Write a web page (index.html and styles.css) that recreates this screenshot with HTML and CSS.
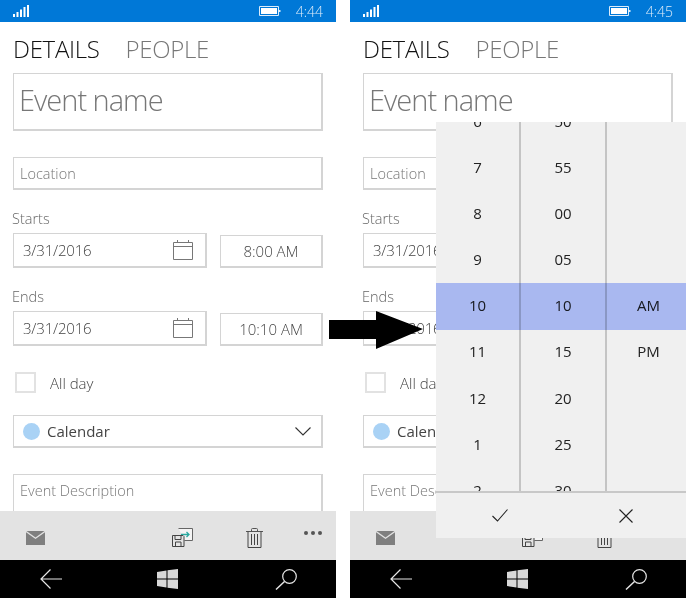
FILE: index.html
```html
<!DOCTYPE html>
<html lang="en">
<head>
    <meta charset="UTF-8">
    <meta name="viewport" content="width=device-width, initial-scale=1.0">
    <title>New event time picker</title>
    <link rel="stylesheet" href="styles.css">
</head>
<body>
    <svg class="defs" width="0" height="0">
        <symbol id="signal" viewBox="0 0 16 12"><path d="M0 9h2v3H0zM3.500 7h2v5h-2zM7 4.500h2V12H7zM10.500 2h2v10h-2zM14 0h2v12h-2z" fill="#fff"/></symbol>
        <symbol id="battery" viewBox="0 0 22 10"><path d="M.5.500h19v9H.5z" fill="none" stroke="#dcecfa"/><path d="M2 2h16v6H2z" fill="#fff"/><path d="M20 4h1.500v2H20z" fill="#dcecfa"/></symbol>
        <symbol id="calendar" viewBox="0 0 20 20"><path d="M.5 2.500h19v17H.5zM.5 6.500h19M4.500 0v3M15.500 0v3" fill="none" stroke="#777"/></symbol>
        <symbol id="chevron" viewBox="0 0 16 9"><path d="M.5.500 8 8 15.500.500" fill="none" stroke="#333" stroke-width="1.100"/></symbol>
        <symbol id="mail" viewBox="0 0 19 14"><path d="M0 1.200 9.500 8 19 1.200V14H0z" fill="#7f7f7f"/><path d="M.5 0h18L9.500 6.500z" fill="#7f7f7f"/></symbol>
        <symbol id="save" viewBox="0 0 21 19"><path d="M6.500.500h14v12h-8" fill="#f4f4f4" stroke="#666"/><path d="M9 6.500h8M14.500 4l2.500 2.500L14.500 9" fill="none" stroke="#2aa9a0" stroke-width="1.300"/><path d="M.500 7.500h10.500l1 1v10h-11.500z" fill="#e4e4e4" stroke="#444"/><path d="M3 7.500v4h6v-4M3.500 18.500v-4.500h5.500v4.500" fill="none" stroke="#444"/></symbol>
        <symbol id="trash" viewBox="0 0 17 20"><path d="M0 3.500h17M5.500 3.500V1.500q0-1 1-1h4q1 0 1 1v2" fill="none" stroke="#555"/><path d="M2 3.500v16h13v-16M5.500 6v11M8.500 6v11M11.500 6v11" fill="none" stroke="#444"/></symbol>
        <symbol id="back" viewBox="0 0 22 20"><path d="M22 10H1M10.500.500 1 10l9.500 9.500" fill="none" stroke="#e6e6e6" stroke-width="1.200"/></symbol>
        <symbol id="windows" viewBox="0 0 21 20"><path d="M0 3 9.500 1.500v8H0zM10.500 1.300 21 0v9.500H10.500zM0 10.500h9.500v8L0 17zM10.500 10.500H21V20l-10.500-1.300z" fill="#d8d8d8"/></symbol>
        <symbol id="search" viewBox="0 0 22 21"><circle cx="14.500" cy="7.500" r="6.800" fill="none" stroke="#e6e6e6" stroke-width="1.200"/><path d="M9.500 12.500 1 20.500" fill="none" stroke="#e6e6e6" stroke-width="1.400"/></symbol>
        <symbol id="check" viewBox="0 0 16 13"><path d="M.5 7 5.500 12 15.500.5" fill="none" stroke="#222" stroke-width="1.100"/></symbol>
        <symbol id="close" viewBox="0 0 14 14"><path d="M.5.500l13 13M13.500.500l-13 13" fill="none" stroke="#222" stroke-width="1.100"/></symbol>
    </svg>

    <div class="screens">
        <section class="phone">
            <header class="status-bar">
                <svg class="icon-signal"><use href="#signal"/></svg>
                <svg class="icon-battery"><use href="#battery"/></svg>
                <span class="clock">4:44</span>
            </header>
            <main class="content">
                <nav class="tabs"><span class="tab active">DETAILS</span><span class="tab">PEOPLE</span></nav>
                <div class="field field-name">Event name</div>
                <div class="field field-location">Location</div>
                <label class="caption">Starts</label>
                <div class="when">
                    <div class="field field-date">3/31/2016 <svg class="icon-calendar"><use href="#calendar"/></svg></div>
                    <div class="field field-time">8:00 AM</div>
                </div>
                <label class="caption caption-ends">Ends</label>
                <div class="when">
                    <div class="field field-date">3/31/2016 <svg class="icon-calendar"><use href="#calendar"/></svg></div>
                    <div class="field field-time">10:10 AM</div>
                </div>
                <div class="all-day"><span class="checkbox"></span>All day</div>
                <div class="field field-select"><span class="dot"></span>Calendar<svg class="icon-chevron"><use href="#chevron"/></svg></div>
                <div class="field field-description">Event Description</div>
            </main>
            <div class="app-bar">
                <svg class="icon-mail"><use href="#mail"/></svg>
                <svg class="icon-save"><use href="#save"/></svg>
                <svg class="icon-trash"><use href="#trash"/></svg>
                <span class="more"><i></i><i></i><i></i></span>
            </div>
            <footer class="nav-bar">
                <svg class="icon-back"><use href="#back"/></svg>
                <svg class="icon-windows"><use href="#windows"/></svg>
                <svg class="icon-search"><use href="#search"/></svg>
            </footer>
        </section>

        <section class="phone">
            <header class="status-bar">
                <svg class="icon-signal"><use href="#signal"/></svg>
                <svg class="icon-battery"><use href="#battery"/></svg>
                <span class="clock">4:45</span>
            </header>
            <main class="content">
                <nav class="tabs"><span class="tab active">DETAILS</span><span class="tab">PEOPLE</span></nav>
                <div class="field field-name">Event name</div>
                <div class="field field-location">Location</div>
                <label class="caption">Starts</label>
                <div class="when">
                    <div class="field field-date">3/31/2016 <svg class="icon-calendar"><use href="#calendar"/></svg></div>
                    <div class="field field-time">8:00 AM</div>
                </div>
                <label class="caption caption-ends">Ends</label>
                <div class="when">
                    <div class="field field-date">3/31/2016 <svg class="icon-calendar"><use href="#calendar"/></svg></div>
                    <div class="field field-time">10:10 AM</div>
                </div>
                <div class="all-day"><span class="checkbox"></span>All day</div>
                <div class="field field-select"><span class="dot"></span>Calendar<svg class="icon-chevron"><use href="#chevron"/></svg></div>
                <div class="field field-description">Event Description</div>
            </main>
            <div class="app-bar">
                <svg class="icon-mail"><use href="#mail"/></svg>
                <svg class="icon-save"><use href="#save"/></svg>
                <svg class="icon-trash"><use href="#trash"/></svg>
                <span class="more"><i></i><i></i><i></i></span>
            </div>
            <footer class="nav-bar">
                <svg class="icon-back"><use href="#back"/></svg>
                <svg class="icon-windows"><use href="#windows"/></svg>
                <svg class="icon-search"><use href="#search"/></svg>
            </footer>

            <div class="picker">
                <div class="wheels">
                    <ul class="wheel">
                        <li>6</li><li>7</li><li>8</li><li>9</li><li>10</li><li>11</li><li>12</li><li>1</li><li>2</li>
                    </ul>
                    <ul class="wheel wheel-minutes">
                        <li>50</li><li>55</li><li>00</li><li>05</li><li>10</li><li>15</li><li>20</li><li>25</li><li>30</li>
                    </ul>
                    <ul class="wheel wheel-period">
                        <li></li><li></li><li></li><li></li><li>AM</li><li>PM</li>
                    </ul>
                </div>
                <div class="band"></div>
                <div class="picker-actions">
                    <svg class="icon-check"><use href="#check"/></svg>
                    <svg class="icon-close"><use href="#close"/></svg>
                </div>
            </div>
        </section>
    </div>

    <div class="arrow"></div>
</body>
</html>
```

FILE: styles.css
```css
* {
    box-sizing: border-box;
}

body {
    margin: 0;
    background-color: #fff;
    font-family: "Open Sans", "Noto Sans", sans-serif;
    color: #444;
}

.defs {
    position: absolute;
}

.screens {
    display: flex;
    justify-content: space-between;
    width: 686px;
    height: 598px;
}

.phone {
    position: relative;
    display: flex;
    flex-direction: column;
    width: 336px;
    height: 598px;
    overflow: hidden;
}

/* status bar */
.status-bar {
    display: flex;
    align-items: center;
    height: 22px;
    padding: 0 13px;
    background-color: #0078d7;
    color: #dcecfa;
}

.icon-signal {
    width: 16px;
    height: 12px;
    margin-bottom: 1px;
}

.icon-battery {
    width: 22px;
    height: 10px;
    margin-left: auto;
}

.clock {
    margin-left: 15px;
    font-size: 14px;
    font-weight: 300;
}

/* form */
.content {
    flex: 1;
    min-height: 0;
    overflow: hidden;
    padding: 0 13px;
}

.tabs {
    display: flex;
    gap: 26px;
    height: 51px;
    padding-top: 10px;
    font-size: 24px;
    line-height: 34px;
    font-weight: 300;
    letter-spacing: -.3px;
}

.tab {
    color: #777;
}

.tab.active {
    color: #111;
}

.field {
    display: flex;
    align-items: center;
    border: 2px solid #d4d4d4;
    border-width: 1px 2px 2px 1px;
    background-color: #fff;
    color: #777;
    padding-left: 6px;
    font-size: 14.500px;
    font-weight: 300;
}

.field-name {
    width: 310px;
    height: 58px;
    font-size: 29px;
    letter-spacing: -1px;
    padding-left: 5px;
    padding-bottom: 5px;
}

.field-location {
    width: 310px;
    height: 33px;
    margin-top: 26px;
}

.caption {
    display: block;
    height: 43px;
    padding-top: 19px;
    margin-left: -1px;
    font-size: 14.500px;
    font-weight: 300;
    line-height: 19px;
    color: #666;
}

.caption-ends {
    height: 43px;
    padding-top: 19px;
}

.when {
    display: flex;
    align-items: flex-end;
    justify-content: space-between;
    width: 310px;
}

.field-date {
    justify-content: space-between;
    width: 194px;
    height: 35px;
    padding: 0 12px 0 9px;
    font-size: 15px;
    letter-spacing: -.2px;
    color: #444;
}

.icon-calendar {
    width: 20px;
    height: 20px;
}

.field-time {
    justify-content: center;
    width: 103px;
    height: 33px;
    padding: 0;
    font-size: 15px;
    color: #444;
}

.all-day {
    display: flex;
    align-items: center;
    height: 21px;
    margin: 26px 0 0 2px;
    font-size: 15px;
    font-weight: 300;
    color: #444;
}

.checkbox {
    width: 21px;
    height: 21px;
    margin-right: 14px;
    border: 2px solid #e2e2e2;
}

.field-select {
    width: 310px;
    height: 33px;
    margin-top: 22px;
    padding: 0 10px 0 9px;
    font-size: 15px;
    font-weight: 400;
    color: #444;
}

.dot {
    width: 17px;
    height: 17px;
    margin-right: 7px;
    border-radius: 50%;
    background-color: #a9d2f5;
}

.icon-chevron {
    width: 16px;
    height: 9px;
    margin-left: auto;
}

.field-description {
    width: 310px;
    height: 50px;
    margin-top: 26px;
    align-items: flex-start;
    padding-top: 6px;
}

/* bars at the bottom */
.app-bar {
    position: relative;
    display: flex;
    align-items: center;
    height: 49px;
    padding: 4px 14px 0 26px;
    background-color: #e3e3e3;
}

.icon-mail {
    width: 19px;
    height: 14px;
}

.icon-save {
    width: 21px;
    height: 19px;
    margin-left: 127px;
}

.icon-trash {
    width: 17px;
    height: 20px;
    margin-left: 53px;
}

.more {
    display: flex;
    gap: 3px;
    margin: -9px 0 0 auto;
}

.more i {
    width: 4px;
    height: 4px;
    border-radius: 50%;
    background-color: #555;
}

.nav-bar {
    display: flex;
    align-items: center;
    height: 38px;
    padding: 0 39px 0 40px;
    background-color: #000;
}

.icon-back {
    width: 22px;
    height: 20px;
}

.icon-windows {
    width: 21px;
    height: 20px;
    margin-left: 95px;
}

.icon-search {
    width: 22px;
    height: 21px;
    margin-left: auto;
}

/* time picker */
.picker {
    position: absolute;
    left: 86px;
    top: 122px;
    width: 250px;
    height: 416px;
    display: flex;
    flex-direction: column;
    background-color: #f0f0f0;
    color: #222;
}

.wheels {
    display: flex;
    height: 371px;
    overflow: hidden;
    border-bottom: 2px solid #c8c8c8;
}

.wheel {
    list-style: none;
    margin: -23px 0 0;
    padding: 0;
    width: 85px;
    border-right: 2px solid #c4c4c4;
    font-size: 15px;
    text-align: center;
}

.wheel li {
    height: 46.100px;
    line-height: 45px;
}

.wheel-minutes {
    width: 86px;
}

.wheel-period {
    flex: 1;
    border-right: 0;
    padding-left: 4px;
}

.band {
    position: absolute;
    left: 0;
    right: 0;
    top: 161px;
    height: 47px;
    background-color: #b4c4ff;
    mix-blend-mode: multiply;
}

.picker-actions {
    position: relative;
    flex: 1;
    display: flex;
    align-items: center;
    padding: 0 53px 0 56px;
}

.icon-check {
    width: 16px;
    height: 13px;
}

.icon-close {
    width: 14px;
    height: 14px;
    margin-left: auto;
}

.arrow {
    position: absolute;
    left: 329px;
    top: 311px;
    width: 94px;
    height: 38px;
    background-color: #000;
    clip-path: polygon(0 9px, 47px 9px, 47px 0, 94px 18px, 47px 38px, 47px 28px, 0 28px);
}
```
